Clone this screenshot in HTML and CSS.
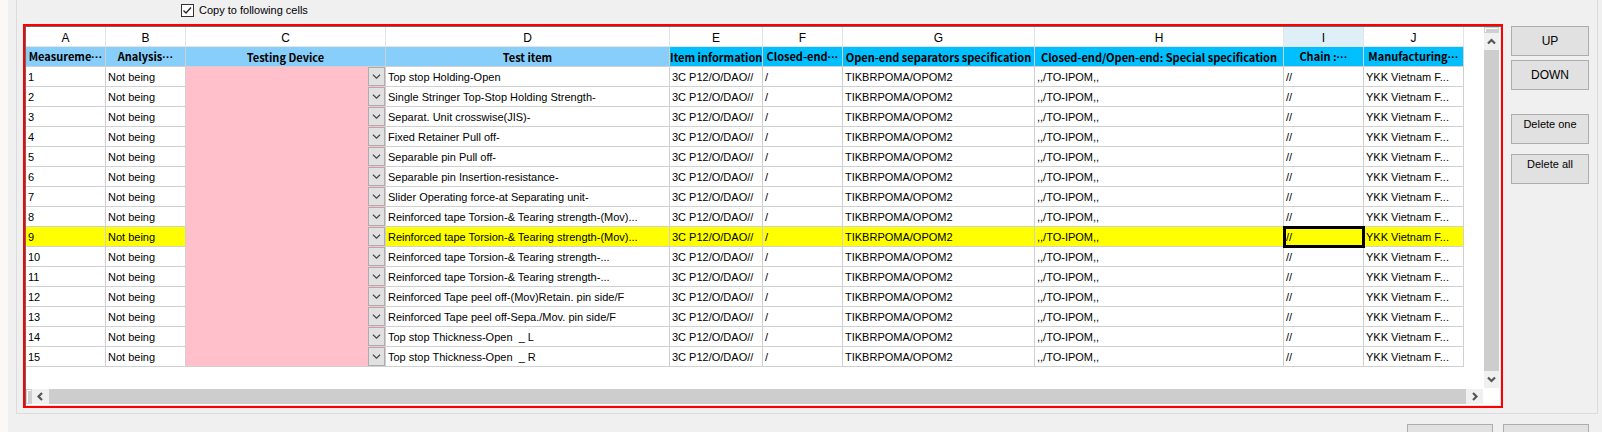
FILE: index.html
```html
<!DOCTYPE html>
<html lang="en">
<head>
<meta charset="utf-8">
<title>Test items</title>
<link rel="stylesheet" href="styles.css">
</head>
<body>
<svg class="defs" aria-hidden="true">
  <symbol id="chev" viewBox="0 0 17 19"><path d="M4.5 7.5l4 4 4-4" fill="none" stroke="#444" stroke-width="1.3"/></symbol>
  <symbol id="up" viewBox="0 0 15 17"><path d="M4 10.5L7.5 7l3.500 3.500" fill="none" stroke="#555" stroke-width="2.2"/></symbol>
  <symbol id="down" viewBox="0 0 15 17"><path d="M4 6.500L7.500 10 11 6.500" fill="none" stroke="#555" stroke-width="2.2"/></symbol>
  <symbol id="left" viewBox="0 0 17 15"><path d="M10 4L6.500 7.500 10 11" fill="none" stroke="#555" stroke-width="2.2"/></symbol>
  <symbol id="right" viewBox="0 0 17 15"><path d="M7 4l3.500 3.500L7 11" fill="none" stroke="#555" stroke-width="2.2"/></symbol>
</svg>
<main class="window">
  <section class="group">
    <div class="option"><input class="check" type="checkbox" id="copy" checked><label for="copy">Copy to following cells</label></div>
    <div class="work">
      <div class="sheet">
        <div class="view">
          <table class="grid">
            <colgroup><col class="w80"><col class="w80"><col class="w200"><col class="w284"><col class="w93"><col class="w80"><col class="w192"><col class="w249"><col class="w80"><col class="w100"></colgroup>
            <thead>
              <tr class="letters"><th>A</th><th>B</th><th>C</th><th>D</th><th>E</th><th>F</th><th>G</th><th>H</th><th class="current">I</th><th>J</th></tr>
              <tr class="titles"><th>Measureme<span class="dots">···</span></th><th>Analysis<span class="dots">···</span></th><th>Testing Device</th><th>Test item</th><th class="deep">Item information</th><th class="deep">Closed-end<span class="dots">···</span></th><th class="deep">Open-end separators specification</th><th class="deep">Closed-end/Open-end: Special specification</th><th class="deep">Chain :<span class="dots">···</span></th><th class="deep">Manufacturing<span class="dots">···</span></th></tr>
            </thead>
            <tbody>
              <tr><td>1</td><td>Not being</td><td class="device"><div class="combo"><select aria-label="Testing device 1"></select><svg><use href="#chev"/></svg></div></td><td>Top stop Holding-Open</td><td>3C P12/O/DAO//</td><td>/</td><td>TIKBRPOMA/OPOM2</td><td>,,/TO-IPOM,,</td><td>//</td><td>YKK Vietnam F...</td></tr>
              <tr><td>2</td><td>Not being</td><td class="device"><div class="combo"><select aria-label="Testing device 2"></select><svg><use href="#chev"/></svg></div></td><td>Single Stringer Top-Stop Holding Strength-</td><td>3C P12/O/DAO//</td><td>/</td><td>TIKBRPOMA/OPOM2</td><td>,,/TO-IPOM,,</td><td>//</td><td>YKK Vietnam F...</td></tr>
              <tr><td>3</td><td>Not being</td><td class="device"><div class="combo"><select aria-label="Testing device 3"></select><svg><use href="#chev"/></svg></div></td><td>Separat. Unit crosswise(JIS)-</td><td>3C P12/O/DAO//</td><td>/</td><td>TIKBRPOMA/OPOM2</td><td>,,/TO-IPOM,,</td><td>//</td><td>YKK Vietnam F...</td></tr>
              <tr><td>4</td><td>Not being</td><td class="device"><div class="combo"><select aria-label="Testing device 4"></select><svg><use href="#chev"/></svg></div></td><td>Fixed Retainer Pull off-</td><td>3C P12/O/DAO//</td><td>/</td><td>TIKBRPOMA/OPOM2</td><td>,,/TO-IPOM,,</td><td>//</td><td>YKK Vietnam F...</td></tr>
              <tr><td>5</td><td>Not being</td><td class="device"><div class="combo"><select aria-label="Testing device 5"></select><svg><use href="#chev"/></svg></div></td><td>Separable pin Pull off-</td><td>3C P12/O/DAO//</td><td>/</td><td>TIKBRPOMA/OPOM2</td><td>,,/TO-IPOM,,</td><td>//</td><td>YKK Vietnam F...</td></tr>
              <tr><td>6</td><td>Not being</td><td class="device"><div class="combo"><select aria-label="Testing device 6"></select><svg><use href="#chev"/></svg></div></td><td>Separable pin Insertion-resistance-</td><td>3C P12/O/DAO//</td><td>/</td><td>TIKBRPOMA/OPOM2</td><td>,,/TO-IPOM,,</td><td>//</td><td>YKK Vietnam F...</td></tr>
              <tr><td>7</td><td>Not being</td><td class="device"><div class="combo"><select aria-label="Testing device 7"></select><svg><use href="#chev"/></svg></div></td><td>Slider Operating force-at Separating unit-</td><td>3C P12/O/DAO//</td><td>/</td><td>TIKBRPOMA/OPOM2</td><td>,,/TO-IPOM,,</td><td>//</td><td>YKK Vietnam F...</td></tr>
              <tr><td>8</td><td>Not being</td><td class="device"><div class="combo"><select aria-label="Testing device 8"></select><svg><use href="#chev"/></svg></div></td><td>Reinforced tape Torsion-&amp; Tearing strength-(Mov)...</td><td>3C P12/O/DAO//</td><td>/</td><td>TIKBRPOMA/OPOM2</td><td>,,/TO-IPOM,,</td><td>//</td><td>YKK Vietnam F...</td></tr>
              <tr class="marked"><td>9</td><td>Not being</td><td class="device"><div class="combo"><select aria-label="Testing device 9"></select><svg><use href="#chev"/></svg></div></td><td>Reinforced tape Torsion-&amp; Tearing strength-(Mov)...</td><td>3C P12/O/DAO//</td><td>/</td><td>TIKBRPOMA/OPOM2</td><td>,,/TO-IPOM,,</td><td class="active">//</td><td>YKK Vietnam F...</td></tr>
              <tr><td>10</td><td>Not being</td><td class="device"><div class="combo"><select aria-label="Testing device 10"></select><svg><use href="#chev"/></svg></div></td><td>Reinforced tape Torsion-&amp; Tearing strength-...</td><td>3C P12/O/DAO//</td><td>/</td><td>TIKBRPOMA/OPOM2</td><td>,,/TO-IPOM,,</td><td>//</td><td>YKK Vietnam F...</td></tr>
              <tr><td>11</td><td>Not being</td><td class="device"><div class="combo"><select aria-label="Testing device 11"></select><svg><use href="#chev"/></svg></div></td><td>Reinforced tape Torsion-&amp; Tearing strength-...</td><td>3C P12/O/DAO//</td><td>/</td><td>TIKBRPOMA/OPOM2</td><td>,,/TO-IPOM,,</td><td>//</td><td>YKK Vietnam F...</td></tr>
              <tr><td>12</td><td>Not being</td><td class="device"><div class="combo"><select aria-label="Testing device 12"></select><svg><use href="#chev"/></svg></div></td><td>Reinforced Tape peel off-(Mov)Retain. pin side/F</td><td>3C P12/O/DAO//</td><td>/</td><td>TIKBRPOMA/OPOM2</td><td>,,/TO-IPOM,,</td><td>//</td><td>YKK Vietnam F...</td></tr>
              <tr><td>13</td><td>Not being</td><td class="device"><div class="combo"><select aria-label="Testing device 13"></select><svg><use href="#chev"/></svg></div></td><td>Reinforced Tape peel off-Sepa./Mov. pin side/F</td><td>3C P12/O/DAO//</td><td>/</td><td>TIKBRPOMA/OPOM2</td><td>,,/TO-IPOM,,</td><td>//</td><td>YKK Vietnam F...</td></tr>
              <tr><td>14</td><td>Not being</td><td class="device"><div class="combo"><select aria-label="Testing device 14"></select><svg><use href="#chev"/></svg></div></td><td>Top stop Thickness-Open &nbsp;_ L</td><td>3C P12/O/DAO//</td><td>/</td><td>TIKBRPOMA/OPOM2</td><td>,,/TO-IPOM,,</td><td>//</td><td>YKK Vietnam F...</td></tr>
              <tr><td>15</td><td>Not being</td><td class="device"><div class="combo"><select aria-label="Testing device 15"></select><svg><use href="#chev"/></svg></div></td><td>Top stop Thickness-Open &nbsp;_ R</td><td>3C P12/O/DAO//</td><td>/</td><td>TIKBRPOMA/OPOM2</td><td>,,/TO-IPOM,,</td><td>//</td><td>YKK Vietnam F...</td></tr>
            </tbody>
          </table>
        </div>
        <div class="vbar"><span class="split"></span><button aria-label="Scroll up"><svg><use href="#up"/></svg></button><span class="thumb"></span><button aria-label="Scroll down"><svg><use href="#down"/></svg></button></div>
        <div class="hbar"><span class="split"></span><button aria-label="Scroll left"><svg><use href="#left"/></svg></button><span class="thumb"></span><button aria-label="Scroll right"><svg><use href="#right"/></svg></button></div>
      </div>
      <div class="actions">
        <button class="btn">UP</button>
        <button class="btn">DOWN</button>
        <button class="btn high spaced">Delete one</button>
        <button class="btn high below">Delete all</button>
      </div>
    </div>
  </section>
  <footer class="footer"><button class="btn wide" aria-label="Confirm"></button><button class="btn wide" aria-label="Close"></button></footer>
</main>
</body>
</html>
```
FILE: styles.css
```css
* { box-sizing: border-box; }
html { background: #faf9f7; }
body {
  margin: 0;
  font: 11px/16px "Liberation Sans", Arial, sans-serif;
  color: #000;
}
button, select, input { font: inherit; color: inherit; margin: 0; }
svg { display: block; }
.defs { position: absolute; width: 0; height: 0; }

.window { margin-left: 8px; padding: 0 4px 0 8px; background: #f0f0f0; height: 100vh; overflow: hidden; }
.group { border: 1px solid #dcdcdc; border-top: 0; padding: 2px 8px 5px 6px; }
.option { display: flex; align-items: center; gap: 5px; height: 16px; margin-left: 158px; }
.check {
  appearance: none;
  width: 13px;
  height: 13px;
  border: 1px solid #333;
  background: #fff url("data:image/svg+xml,%3Csvg xmlns='http://www.w3.org/2000/svg' viewBox='0 0 11 11'%3E%3Cpath d='M1.500 5.500l2.500 2.500 5-5.500' fill='none' stroke='%23222' stroke-width='1.300'/%3E%3C/svg%3E");
}
.work { display: flex; align-items: flex-start; gap: 8px; margin-top: 6px; }

.sheet {
  flex: 1;
  min-width: 0;
  display: grid;
  grid-template-columns: minmax(0, 1fr) 17px;
  grid-template-rows: auto 17px;
  border: 2px solid #f00;
  background: #fff;
  box-shadow: inset 1px 1px #696969, inset -1px -1px #e3e3e3;
  padding: 1px;
}
.view { overflow: hidden; padding-bottom: 21px; }
.grid { border-collapse: separate; border-spacing: 0; table-layout: fixed; width: 1438px; }
.w80 { width: 80px; }
.w93 { width: 93px; }
.w100 { width: 100px; }
.w192 { width: 192px; }
.w200 { width: 200px; }
.w249 { width: 249px; }
.w284 { width: 284px; }
.grid th, .grid td {
  height: 20px;
  padding: 1px 0 0 2px;
  border: solid #d0d0d0;
  border-width: 0 1px 1px 0;
  line-height: 16px;
  text-align: left;
  white-space: nowrap;
  overflow: hidden;
}
.grid th { padding: 0; text-align: center; }
.grid .letters th { padding-top: 2px; font-weight: 400; font-size: 12px; border-color: #e4e4e4; }
.letters .current { background: #dfeff8; }
.titles th { background: #87cefa; font-family: "Noto Sans CJK JP", sans-serif; font-weight: 700; }
.titles .deep { background: #00bfff; }
.dots { font-family: "Liberation Sans", Arial, sans-serif; }
.marked td { background: #ff0; }
.grid .device { padding: 0; background: #ffc0cb; border-bottom-color: #ffc0cb; }
tr:last-child .device { border-bottom-color: #d0d0d0; }
.combo { display: grid; grid-template-columns: 1fr 17px; height: 19px; }
.combo select { grid-area: 1 / 1 / 2 / 3; appearance: none; border: 0; padding: 0; background: transparent; }
.combo svg { grid-area: 1 / 2; width: 17px; height: 19px; background: #e1e1e1; border: 1px solid #adadad; pointer-events: none; }
.grid .active { outline: 3px solid #000; outline-offset: -2px; overflow: visible; }

.vbar, .hbar { display: flex; }
.vbar { flex-direction: column; padding: 0 1px; }
.hbar { padding: 1px 0; }
.vbar button, .hbar button { border: 0; padding: 0; background: #f0f0f0; }
.vbar svg, .vbar button { width: 15px; height: 17px; }
.hbar svg, .hbar button { width: 17px; height: 15px; }
.split { flex: 0 0 6px; background: #d0d0d0; border: 1px solid #d0d0d0; box-shadow: inset 1px 1px #fff; }
.thumb { flex: 1; background: #cdcdcd; }

.actions { flex: 0 0 78px; display: flex; flex-direction: column; gap: 4px; padding-top: 2px; }
.btn { height: 30px; border: 1px solid #adadad; background: #e1e1e1; padding: 0; font-size: 12px; }
.high { padding-bottom: 10px; font-size: 11px; }
.spaced { margin-top: 20px; }
.below { margin-top: 6px; }
.footer { display: flex; justify-content: flex-end; gap: 10px; padding: 10px 9px 0 0; }
.wide { width: 86px; }
```
